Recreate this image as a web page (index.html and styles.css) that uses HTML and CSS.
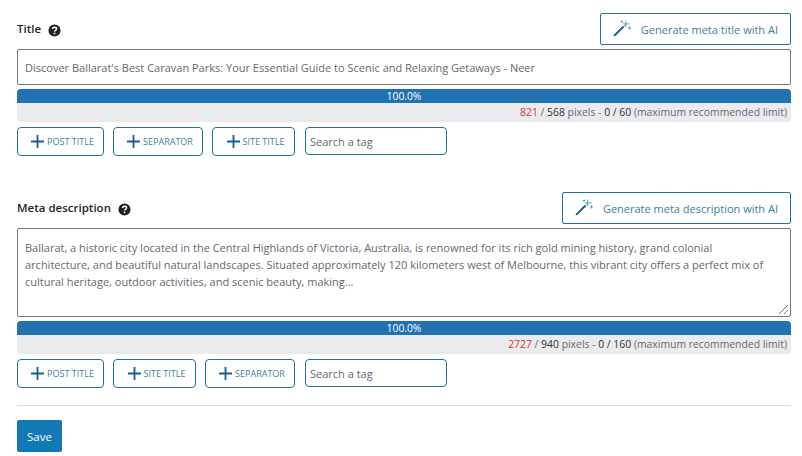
FILE: index.html
```html
<!DOCTYPE html>
<html lang="en">
<head>
    <meta charset="UTF-8">
    <title>SEO settings</title>
    <link rel="stylesheet" href="styles.css">
</head>
<body>
    <svg class="defs" width="0" height="0">
        <symbol id="wand" viewBox="0 0 24 24">
            <path d="M1.5 22.5 L14 10" fill="none" stroke="#135e7c" stroke-width="2.6"/>
            <path d="M14 10 L17 7" fill="none" stroke="#2271a5" stroke-width="1"/>
            <path d="M17 2v9M13 6.5h9M22 10v4M20 12h4M12 2v3M10.5 3.5h3" fill="none" stroke="#3c7f9e" stroke-width="1"/>
        </symbol>
        <symbol id="help" viewBox="0 0 14 14">
            <circle cx="7" cy="7" r="6.5" fill="#1d2327"/>
            <path d="M4.9 5.4c0-1.3 1-2 2.2-2s2.1.7 2.1 1.8c0 1.6-2.1 1.5-2.1 3" fill="none" stroke="#fff" stroke-width="1.6"/>
            <rect x="6.2" y="9.3" width="1.7" height="1.7" fill="#fff"/>
        </symbol>
        <symbol id="plus" viewBox="0 0 13 13">
            <path d="M6.5 0v13M0 6.5h13" fill="none" stroke="#135e96" stroke-width="1.8"/>
        </symbol>
    </svg>

    <section class="field field-title">
        <div class="field-head">
            <label class="field-label">Title <svg class="help"><use href="#help"/></svg></label>
            <button class="ai-button"><svg class="wand"><use href="#wand"/></svg>Generate meta title with AI</button>
        </div>
        <div class="text-box title-box">Discover Ballarat's Best Caravan Parks: Your Essential Guide to Scenic and Relaxing Getaways - Neer</div>
        <div class="meter">
            <div class="meter-bar">100.0%</div>
            <div class="meter-note"><span class="over">821</span> / <b>568</b> pixels - <b>0 / 60</b> (maximum recommended limit)</div>
        </div>
        <div class="tags">
            <button class="tag tag-post"><svg class="plus"><use href="#plus"/></svg>POST TITLE</button>
            <button class="tag tag-sep"><svg class="plus"><use href="#plus"/></svg>SEPARATOR</button>
            <button class="tag tag-site"><svg class="plus"><use href="#plus"/></svg>SITE TITLE</button>
            <div class="tag-search">Search a tag</div>
        </div>
    </section>

    <section class="field field-desc">
        <div class="field-head">
            <label class="field-label">Meta description <svg class="help"><use href="#help"/></svg></label>
            <button class="ai-button"><svg class="wand"><use href="#wand"/></svg>Generate meta description with AI</button>
        </div>
        <div class="text-box desc-box">
            Ballarat, a historic city located in the Central Highlands of Victoria, Australia, is renowned for its rich gold mining history, grand colonial architecture, and beautiful natural landscapes. Situated approximately 120 kilometers west of Melbourne, this vibrant city offers a perfect mix of cultural heritage, outdoor activities, and scenic beauty, making...
            <svg class="grip" width="11" height="11" viewBox="0 0 11 11"><path d="M1 10 L10 1M6 10 L10 6" stroke="#777" stroke-width="1"/></svg>
        </div>
        <div class="meter">
            <div class="meter-bar">100.0%</div>
            <div class="meter-note"><span class="over">2727</span> / <b>940</b> pixels - <b>0 / 160</b> (maximum recommended limit)</div>
        </div>
        <div class="tags">
            <button class="tag tag-post"><svg class="plus"><use href="#plus"/></svg>POST TITLE</button>
            <button class="tag tag-site"><svg class="plus"><use href="#plus"/></svg>SITE TITLE</button>
            <button class="tag tag-sep"><svg class="plus"><use href="#plus"/></svg>SEPARATOR</button>
            <div class="tag-search">Search a tag</div>
        </div>
    </section>

    <hr class="divider">
    <button class="save">Save</button>
</body>
</html>
```

FILE: styles.css
```css
* {
    box-sizing: border-box;
}
body {
    margin: 0;
    padding: 13px 11px 0 17px;
    background-color: #fff;
    font-family: "Open Sans", "Noto Sans", Arial, sans-serif;
    font-size: 11px;
    color: #50575e;
    overflow: hidden;
}
button {
    font-family: inherit;
    cursor: pointer;
}
.defs {
    position: absolute;
}
.field-desc {
    margin-top: 36px;
}
.field-head {
    display: flex;
    justify-content: space-between;
    align-items: flex-start;
    height: 36px;
}
.field-label {
    display: flex;
    align-items: center;
    gap: 7px;
    font-size: 11.5px;
    font-weight: 600;
    color: #1d2327;
    padding-top: 7px;
}
.help {
    width: 13px;
    height: 13px;
    margin-top: 4px;
}
.ai-button {
    display: flex;
    align-items: center;
    height: 32px;
    padding: 0 12px;
    background: #fff;
    border: 1px solid #2271a5;
    border-radius: 2px;
    font-size: 11px;
    color: #3c7f9e;
}
.wand {
    width: 18px;
    height: 18px;
    margin-right: 10px;
    margin-bottom: 2px;
}
.text-box {
    background: #fff;
    border: 1px solid #777;
    border-radius: 2px;
    font-size: 11px;
    line-height: 17px;
    color: #646970;
    padding: 0 7px;
}
.title-box {
    height: 36px;
    line-height: 35px;
}
.desc-box {
    position: relative;
    height: 89px;
    padding: 10px 20px 0 7px;
}
.grip {
    position: absolute;
    right: 1px;
    bottom: 1px;
}
.meter {
    margin-top: 4px;
    background: #e9ebee;
    border-radius: 4px;
    overflow: hidden;
}
.meter-bar {
    height: 14px;
    background: #2271b1;
    color: #fff;
    text-align: center;
    font-size: 10.3px;
    line-height: 14px;
}
.meter-note {
    height: 19px;
    line-height: 19px;
    padding-right: 4px;
    text-align: right;
    font-size: 10.4px;
    color: #646970;
}
.meter-note b {
    font-weight: 400;
    color: #2c3338;
}
.over {
    color: #d63638;
}
.tags {
    display: flex;
    gap: 9px;
    margin-top: 5px;
}
.tag {
    display: flex;
    align-items: center;
    justify-content: center;
    height: 29px;
    padding: 0 0 1px 4px;
    background: #fff;
    border: 1px solid #1f7396;
    border-radius: 4px;
    font-size: 9px;
    color: #3c7f9e;
}
.tag-post {
    width: 87px;
}
.tag-sep {
    width: 90px;
}
.tag-site {
    width: 83px;
}
.tag .plus {
    width: 13px;
    height: 13px;
    margin-right: 3px;
}
.tag-search {
    width: 142px;
    height: 28px;
    margin-left: 1px;
    padding-left: 4px;
    background: #fff;
    border: 1px solid #1f7396;
    border-radius: 4px;
    font-size: 11px;
    line-height: 27px;
    color: #646970;
}
.divider {
    margin: 17px 0 14px;
    border: 0;
    border-top: 1px solid #dcdcde;
}
.save {
    display: block;
    width: 45px;
    height: 32px;
    padding: 0;
    background: #1279b5;
    border: 0;
    border-radius: 2px;
    color: #fff;
    font-size: 11.5px;
}
```
